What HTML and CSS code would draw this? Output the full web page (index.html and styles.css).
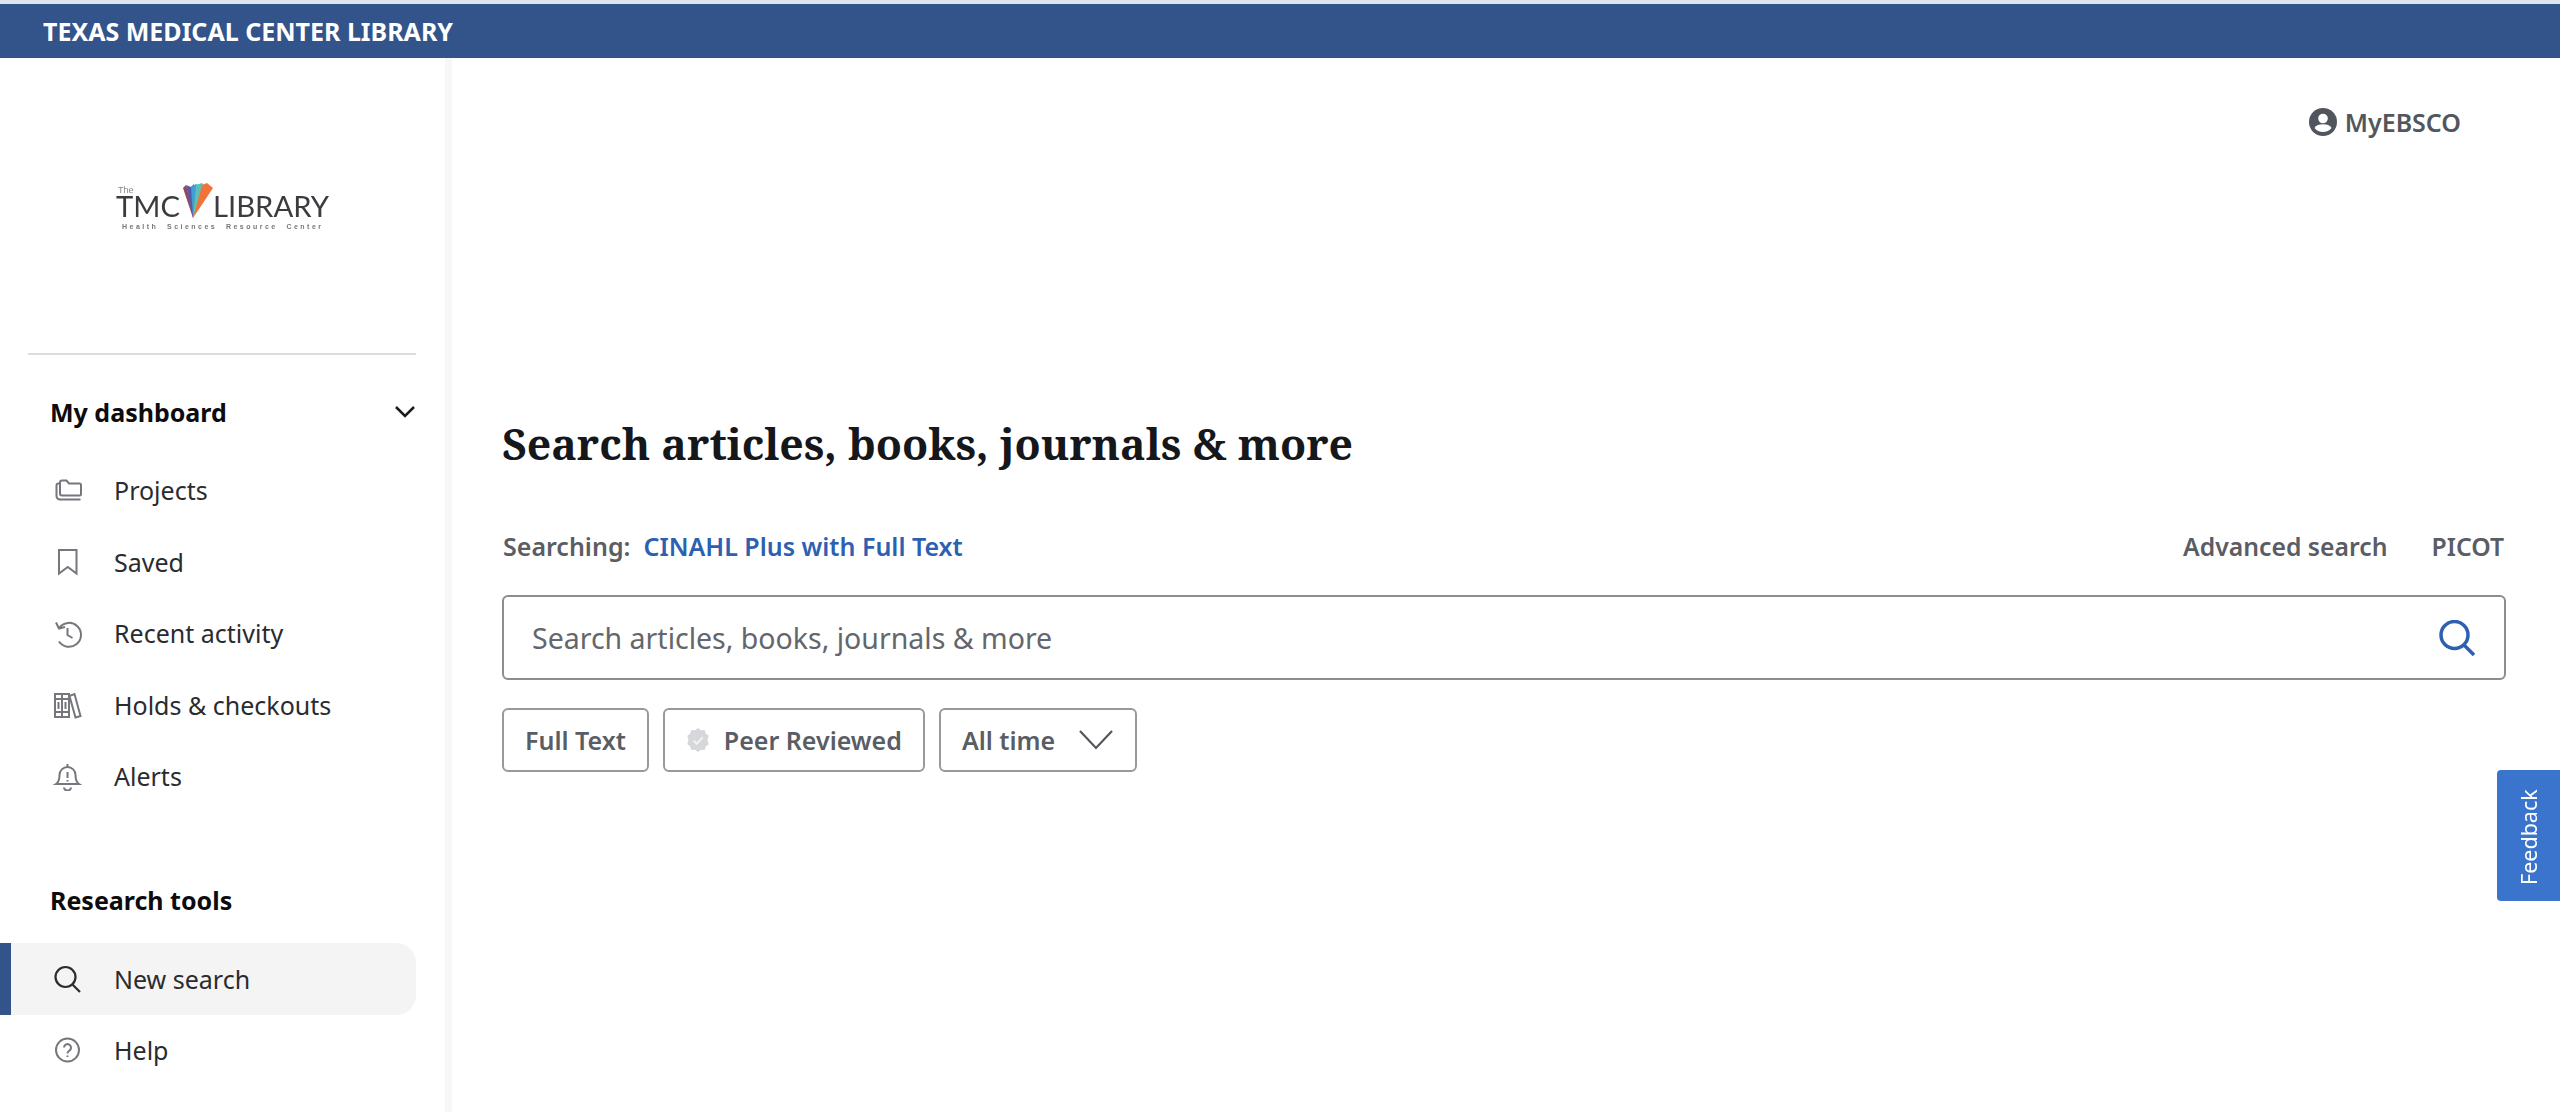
FILE: index.html
```html
<!DOCTYPE html>
<html lang="en">
<head>
<meta charset="utf-8">
<title>Texas Medical Center Library</title>
<link rel="stylesheet" href="styles.css">
</head>
<body>
<header class="banner">TEXAS MEDICAL CENTER LIBRARY</header>
<div class="layout">
  <aside class="sidebar">
    <div class="logo-wrap">
      <svg class="logo" width="216" height="50" viewBox="0 0 216 50">
        <text class="logo-the" x="3" y="10">The</text>
        <text class="logo-main" x="1" y="34" textLength="64" lengthAdjust="spacingAndGlyphs">TMC</text>
        <polygon points="68,5 71,2 78,28 78,35" fill="#8e4a63"/>
        <polygon points="71,2 76,4 79,1 80,28 78,35" fill="#5a58a8"/>
        <polygon points="76,4 81,1 85,3 78,35" fill="#3f9fd0"/>
        <polygon points="81,2 87,0 90,4 78,35" fill="#5cc0b8"/>
        <polygon points="87,2 92,0 98,5 78,35" fill="#f0743a"/>
        <text class="logo-main" x="98" y="34" textLength="116" lengthAdjust="spacingAndGlyphs">LIBRARY</text>
        <text class="logo-sub" x="7" y="46" textLength="200">Health  Sciences  Resource  Center</text>
      </svg>
    </div>
    <nav class="nav">
      <div class="nav-head">
        <span>My dashboard</span>
        <svg class="chev" width="22" height="14" viewBox="0 0 22 14"><path d="M2 2l9 9 9-9"/></svg>
      </div>
      <a class="nav-item">
        <svg class="ico" width="30" height="30" viewBox="0 0 30 30"><path d="M7 8.500h-.5A2 2 0 0 0 4.500 10.500V21a3.500 3.500 0 0 0 3.500 3.500h20.500M8 7.500a2 2 0 0 1 2-2h4.500l2.500 3h10.500a1.500 1.500 0 0 1 1.500 1.500v9a1.500 1.500 0 0 1-1.500 1.500H10a2 2 0 0 1-2-2z"/></svg>
        <span>Projects</span>
      </a>
      <a class="nav-item">
        <svg class="ico" width="30" height="30" viewBox="0 0 30 30"><path d="M7 3h17.500v23.500l-8.750-6.500L7 26.500z"/></svg>
        <span>Saved</span>
      </a>
      <a class="nav-item">
        <svg class="ico" width="30" height="30" viewBox="0 0 30 30"><path d="M7.500 9.500A12 12 0 1 1 7 23.500M4 4.500l3 6 6-1.500M15.500 10v7l5 3"/></svg>
        <span>Recent activity</span>
      </a>
      <a class="nav-item">
        <svg class="ico" width="30" height="30" viewBox="0 0 30 30"><path d="M3 4h7v23H3zM10 4h7v23h-7zM3 9h14M3 22h14M6.500 12v7M13.500 12v7M17.500 6l5-2 6 22-5 1.500z"/></svg>
        <span>Holds &amp; checkouts</span>
      </a>
      <a class="nav-item">
        <svg class="ico" width="30" height="30" viewBox="0 0 30 30"><path d="M4 23c3-2 3.500-5 3.500-9a8 8 0 0 1 16 0c0 4 .5 7 3.500 9zM15.500 3v3M12 26.500a3.500 3 0 0 0 7 0M15.500 11v6M15.500 19v1.500"/></svg>
        <span>Alerts</span>
      </a>
      <div class="nav-head nav-head-second"><span>Research tools</span></div>
      <a class="nav-item nav-item-active">
        <svg class="ico ico-dark" width="30" height="30" viewBox="0 0 30 30"><circle cx="13.500" cy="13" r="10"/><path d="M20.500 20.500l7.500 7.500"/></svg>
        <span>New search</span>
      </a>
      <a class="nav-item">
        <svg class="ico" width="30" height="30" viewBox="0 0 30 30"><circle cx="15.500" cy="15" r="11.500"/><path d="M12 12.500a3.500 3.500 0 1 1 5.500 3c-1.500 1-2 1.500-2 3M15.500 20.500v1.500"/></svg>
        <span>Help</span>
      </a>
    </nav>
  </aside>
  <main class="main">
    <div class="top">
      <a class="account">
        <svg width="28" height="28" viewBox="0 0 28 28"><circle cx="14" cy="14" r="14" fill="#51555d"/><circle cx="14" cy="10.500" r="4.800" fill="#fff"/><path d="M5.500 20c1.500-3 4.500-3.800 8.500-3.800s7 .8 8.500 3.800c-2 2.500-5 4-8.500 4s-6.500-1.500-8.500-4z" fill="#fff"/></svg>
        <span>MyEBSCO</span>
      </a>
    </div>
    <h1 class="title">Search articles, books, journals &amp; more</h1>
    <div class="meta">
      <div class="scope"><span class="scope-label">Searching:</span><a class="scope-link">CINAHL Plus with Full Text</a></div>
      <div class="links"><a>Advanced search</a><a>PICOT</a></div>
    </div>
    <div class="searchbox">
      <span class="placeholder">Search articles, books, journals &amp; more</span>
      <svg class="search-ico" width="36" height="36" viewBox="0 0 36 36"><circle cx="15.500" cy="15" r="13.500"/><path d="M25 25l10 10"/></svg>
    </div>
    <div class="chips">
      <button class="chip">Full Text</button>
      <button class="chip">
        <svg width="24" height="24" viewBox="0 0 24 24"><path d="M12 0l3 2.200 3.700-.2 1 3.500 3 2.200L21.500 12l1.200 4.300-3 2.200-1 3.500-3.700-.2L12 24l-3-2.200-3.700.2-1-3.500-3-2.200L2.500 12 1.300 7.700l3-2.200 1-3.500L9 2.200z" fill="#d6d7da"/><path d="M7.500 12.500l3.200 3.200 6-6.500" fill="none" stroke="#f2f2f3" stroke-width="2"/></svg>
        Peer Reviewed
      </button>
      <button class="chip chip-select">
        All time
        <svg class="chip-chev" width="36" height="24" viewBox="0 0 36 24"><path d="M2 3l16 17L34 3"/></svg>
      </button>
    </div>
  </main>
</div>
<a class="feedback">Feedback</a>
</body>
</html>
```
FILE: styles.css
```css
* { box-sizing: border-box; }
html, body { margin: 0; height: 1112px; overflow: hidden; background: #fff; }
body {
  font-family: "Noto Sans", "Open Sans", sans-serif;
  color: #1f2023;
  padding-top: 4px;
  position: relative;
  background: linear-gradient(#dde4ec, #dde4ec) top/100% 4px no-repeat #fff;
}
a { color: inherit; text-decoration: none; }

.banner {
  height: 54px;
  background: #32548b;
  color: #fff;
  font-size: 25px;
  font-weight: 700;
  line-height: 54px;
  padding-left: 43px;
}

.layout { display: flex; height: 1054px; }

.sidebar {
  width: 452px;
  flex: none;
  border-right: 7px solid #f7f7f7;
  padding-right: 29px;
}
.logo-wrap {
  height: 297px;
  margin-left: 28px;
  border-bottom: 2px solid #dcdcdc;
  padding: 125px 0 0 87px;
}
.logo { display: block; filter: blur(.6px); overflow: visible; }
.logo-the { font: 9px "Liberation Sans", sans-serif; fill: #888; }
.logo-main { font: 400 28px "Lato", sans-serif; fill: #3c3c40; }
.logo-sub { font: 700 7px "Liberation Sans", sans-serif; fill: #777; letter-spacing: 1px; white-space: pre; }

.nav { display: flex; flex-direction: column; padding-top: 38.500px; }
.nav-head {
  display: flex;
  justify-content: space-between;
  align-items: center;
  height: 36px;
  margin: 0 0 25px 50px;
  font-size: 25px;
  font-weight: 700;
  color: #0c0c0e;
}
.nav-head-second { margin-top: 70px; margin-bottom: 24.500px; }
.chev { fill: none; stroke: #1b1b1f; stroke-width: 2.500; }
.nav-item {
  display: flex;
  align-items: center;
  gap: 32px;
  height: 71.500px;
  padding-left: 52px;
  font-size: 25px;
  color: #2a2b2f;
}
.nav-item-active {
  height: 72px;
  background: #f4f4f4;
  border-left: 11px solid #32548b;
  border-radius: 0 20px 20px 0;
  padding-left: 41px;
}
.ico { flex: none; fill: none; stroke: #75777c; stroke-width: 2; }
.ico-dark { stroke: #2b2c30; stroke-width: 2.200; }

.main { flex: 1; padding: 0 54px 0 50px; min-width: 0; }
.top { display: flex; justify-content: flex-end; padding: 50px 45px 0 0; height: 181px; }
.account {
  display: flex;
  align-items: flex-start;
  gap: 8px;
  font-size: 25px;
  font-weight: 600;
  color: #53565d;
  line-height: 28px;
}
.title {
  margin: 175px 0 0;
  font-family: "Noto Serif", "Liberation Serif", serif;
  font-size: 42.750px;
  font-weight: 700;
  line-height: 60px;
  color: #15171a;
}
.meta {
  display: flex;
  justify-content: space-between;
  align-items: center;
  height: 40px;
  margin-top: 52px;
  padding: 0 2px 0 1px;
  font-size: 25px;
  font-weight: 600;
  color: #5a5d63;
}
.scope { display: flex; gap: 13px; }
.scope-link { color: #2d60b0; }
.links { display: flex; gap: 44px; font-size: 24.750px; }
.searchbox {
  display: flex;
  align-items: center;
  justify-content: space-between;
  height: 85px;
  margin-top: 29px;
  padding: 0 29px 0 28px;
  border: 2px solid #8b8d90;
  border-radius: 6px;
}
.placeholder { font-size: 28.500px; color: #63666c; }
.search-ico { fill: none; stroke: #2d60b0; stroke-width: 3.500; }
.chips { display: flex; gap: 14px; margin-top: 28px; }
.chip {
  display: flex;
  align-items: center;
  gap: 14px;
  height: 64px;
  padding: 0 21px;
  background: #fff;
  border: 2px solid #97999c;
  border-radius: 6px;
  font: 600 25px "Noto Sans", sans-serif;
  color: #5a5d63;
}
.chip-select { gap: 23px; }
.chip-chev { fill: none; stroke: #53565c; stroke-width: 2.200; }
.feedback {
  position: absolute;
  right: 0;
  top: 770px;
  width: 63px;
  height: 131px;
  padding-bottom: 3px;
  background: #3b74cd;
  color: #fff;
  display: flex;
  align-items: center;
  justify-content: center;
  writing-mode: vertical-rl;
  transform: rotate(180deg);
  border-radius: 0 4px 4px 0;
  font-size: 21.500px;
}
```
